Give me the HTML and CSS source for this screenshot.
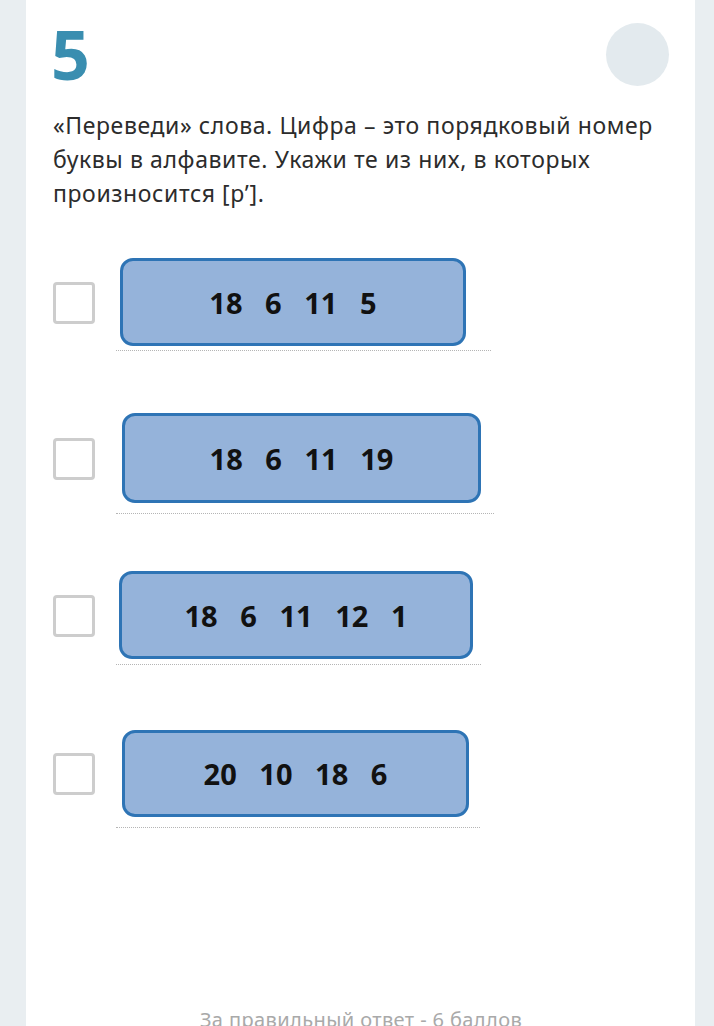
FILE: index.html
```html
<html>
    <head>
        <meta charset="utf-8">
        <link rel="stylesheet" href="styles.css">
    </head>
    <body>
        <div class="card">
            <!--question header-->
            <div class="head">
                <div class="qnum">5</div>
                <div class="dot"></div>
            </div>
            <p class="qtext">«Переведи» слова. Цифра – это порядковый номер буквы в алфавите. Укажи те из них, в которых произносится [р’].</p>

            <!--answer options-->
            <div class="options">
                <div class="option">
                    <span class="check"></span>
                    <div class="answer ans1"><div class="pic">18&nbsp;&nbsp; 6&nbsp;&nbsp; 11&nbsp;&nbsp; 5</div></div>
                </div>
                <div class="option">
                    <span class="check"></span>
                    <div class="answer ans2"><div class="pic">18&nbsp;&nbsp; 6&nbsp;&nbsp; 11&nbsp;&nbsp; 19</div></div>
                </div>
                <div class="option">
                    <span class="check"></span>
                    <div class="answer ans3"><div class="pic">18&nbsp;&nbsp; 6&nbsp;&nbsp; 11&nbsp;&nbsp; 12&nbsp;&nbsp; 1</div></div>
                </div>
                <div class="option last">
                    <span class="check"></span>
                    <div class="answer ans4"><div class="pic">20&nbsp;&nbsp; 10&nbsp;&nbsp; 18&nbsp;&nbsp; 6</div></div>
                </div>
            </div>

            <p class="score">За правильный ответ - 6 баллов</p>
        </div>
    </body>
</html>
```

FILE: styles.css
```css
body{
    margin:0;
    background:#e9eef1;
    font-family:"Noto Sans", "Open Sans", sans-serif;}

/*white question card*/
.card{
    margin:0 19px 0 26px;
    background:#ffffff;
    padding:0 26px 0 27px;
    height:1026px;
    box-sizing:border-box;
    overflow:hidden;}

.head{
    display:flex;
    justify-content:space-between;
    align-items:flex-start;
    padding-top:22px;
    height:88px;
    box-sizing:border-box;}

.qnum{
    font-family:"Open Sans", sans-serif;
    font-weight:700;
    font-size:68px;
    line-height:64px;
    margin-left:-2px;
    color:#3a8eb0;}

.dot{
    width:63px;
    height:63px;
    border-radius:50%;
    background:#e3eaee;
    margin-top:1px;}

.qtext{
    margin:20px 0 0 0;
    font-size:23px;
    letter-spacing:0.6px;
    line-height:34px;
    color:#2c2c2c;}

.options{
    display:flex;
    flex-direction:column;
    gap:52px;
    margin-top:44px;}

.option{
    display:flex;
    align-items:center;}

.option.last{
    margin-top:3px;}

.check{
    width:36px;
    height:36px;
    border:3px solid #cdcdcd;
    border-radius:4px;
    flex:none;}

.answer{
    margin-left:21px;
    border-bottom:1px dotted #b5b5b5;}

/*the picture with the numbers*/
.pic{
    background:#95b3da;
    border:3px solid #2e74b5;
    border-radius:13px;
    box-sizing:border-box;
    display:flex;
    align-items:center;
    justify-content:center;
    font-family:"Open Sans", sans-serif;
    font-weight:700;
    font-size:29px;
    color:#111111;}

.ans1{width:375px; padding:4px 0;}
.ans1 .pic{margin-left:4px; width:346px; height:88px;}
.ans2{width:378px; padding:10px 0;}
.ans2 .pic{margin-left:6px; width:359px; height:90px;}
.ans3{width:365px; padding:5px 0;}
.ans3 .pic{margin-left:3px; width:354px; height:88px;}
.ans4{width:364px; padding:10px 0;}
.ans4 .pic{margin-left:6px; width:347px; height:87px;}

.score{
    margin:178px 0 0 0;
    text-align:center;
    font-size:20px;
    letter-spacing:0.4px;
    color:#a9a9a9;}
```
